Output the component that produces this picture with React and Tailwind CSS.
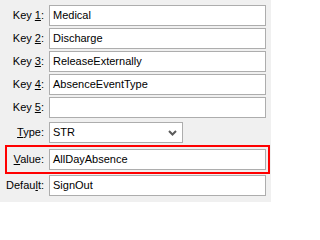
function Field({ value }) {
  return (
    <div className="ml-[5px] w-[217px] h-[21px] border border-[#adadad] bg-white pl-[3px] flex items-center leading-none">
      {value}
    </div>
  );
}

function Row({ label, value, className = "" }) {
  return (
    <div className={`flex items-center ${className}`}>
      <div className="w-[44px] text-right whitespace-nowrap">{label}</div>
      <Field value={value} />
    </div>
  );
}

export default function App() {
  return (
    <div
      className="w-[271px] h-[202px] bg-[#f0f0f0] text-black text-[11px] pt-[5px]"
      style={{ fontFamily: '"Liberation Sans", Arial, sans-serif' }}
    >
      <div className="flex flex-col gap-[2px]">
        <Row label={<>Key <u>1</u>:</>} value="Medical" />
        <Row label={<>Key <u>2</u>:</>} value="Discharge" />
        <Row label={<>Key <u>3</u>:</>} value="ReleaseExternally" />
        <Row label={<>Key <u>4</u>:</>} value="AbsenceEventType" />
        <Row label={<>Key <u>5</u>:</>} value="" />
      </div>

      <div className="flex items-center mt-[4px]">
        <div className="w-[44px] text-right">
          <u>T</u>ype:
        </div>
        <div className="ml-[5px] w-[134px] h-[21px] border border-[#adadad] bg-white pl-[3px] pr-[5px] flex items-center justify-between">
          <span>STR</span>
          <svg width="9" height="6" viewBox="0 0 9 6" className="text-[#5a5a5a]">
            <path d="M1 1 L4.5 4.5 L8 1" fill="none" stroke="currentColor" strokeWidth="2" />
          </svg>
        </div>
      </div>

      <div className="ml-[5px] mt-[2px] w-[265px] h-[29px] border-2 border-[#ff0000] flex items-center">
        <div className="w-[37px] text-right">
          <u>V</u>alue:
        </div>
        <Field value="AllDayAbsence" />
      </div>

      <Row className="mt-[1px]" label={<>Defau<u>l</u>t:</>} value="SignOut" />
    </div>
  );
}
